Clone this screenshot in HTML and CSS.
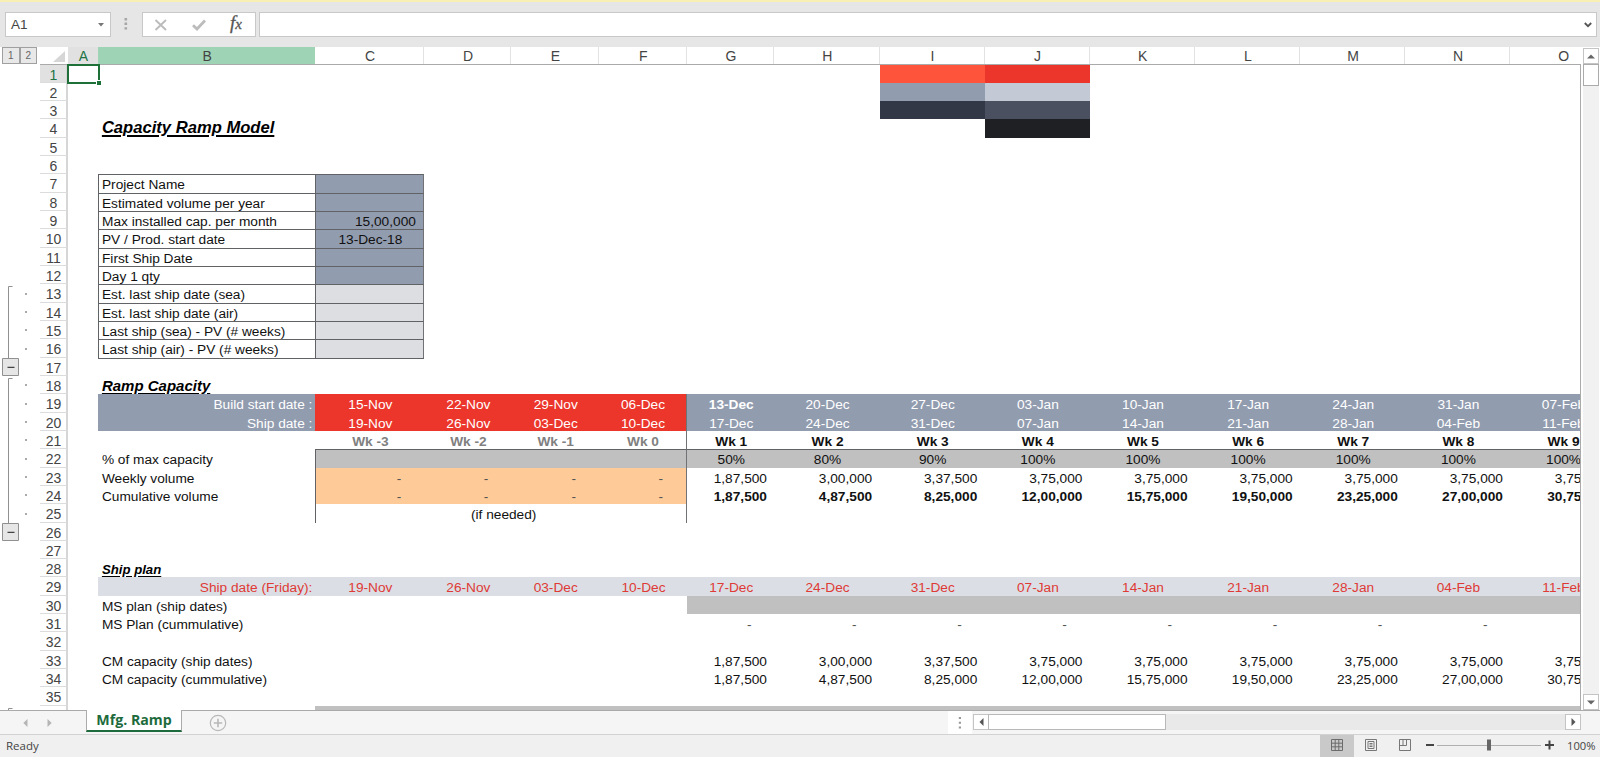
FILE: index.html
```html
<!DOCTYPE html>
<html lang="en">
<head>
<meta charset="utf-8">
<title>Capacity Ramp Model</title>
<link rel="stylesheet" href="styles.css">
</head>
<body>
<div class="app">
  <header class="formula-bar">
    <div class="name-box"><span>A1</span>
      <svg width="6" height="4" viewBox="0 0 6 4"><path d="M0 0h6L3 3.6z" fill="#777"/></svg>
    </div>
    <svg class="grip" width="4" height="14" viewBox="0 0 4 14" fill="#a6a6a6"><path d="M.5 1h2.6v2.4H.5zM.5 5.6h2.6V8H.5zM.5 10.2h2.6v2.4H.5z"/></svg>
    <div class="fx-box">
      <svg width="14" height="14" viewBox="0 0 14 14"><path d="M1.5 2 12 12M12 2 1.5 12" stroke="#bcbcbc" stroke-width="1.9" fill="none"/></svg>
      <svg width="14" height="14" viewBox="0 0 14 14"><path d="M1 7.2 5 11 13 2.500" stroke="#bcbcbc" stroke-width="2.8" fill="none"/></svg>
      <span class="fx">f<small>x</small></span>
    </div>
    <div class="formula-input">
      <svg width="8" height="6" viewBox="0 0 8 6"><path d="M.8 1 4 4.2 7.2 1" stroke="#555" stroke-width="1.8" fill="none"/></svg>
    </div>
  </header>
  <main class="workspace">
    <aside class="outline">
      <div class="levels"><span>1</span><span>2</span></div>
      <svg width="40" height="645" viewBox="0 65 40 645">
        <g fill="none" stroke="#909090">
          <path d="M12.5 286.5h-4V358M12.5 378.5h-4V523M12.5 708.5h-4V712"/>
          <path fill="#e6e6e6" d="M2.5 358.5h16v17h-16zM2.5 523.5h16v17h-16z"/>
          <path stroke="#444" stroke-width="1.4" d="M7.5 367.4h7M7.5 532.4h7"/>
        </g>
        <g id="outline-dots" fill="#aaa"></g>
      </svg>
    </aside>
    <section class="sheet">
      <div class="sheet-grid" id="sheet"></div>
      <div class="selection"><i></i></div>
    </section>
    <div class="edge"></div>
    <div class="vscroll">
      <div class="sbtn"><svg width="8" height="5" viewBox="0 0 8 5"><path d="M0 4.5h8L4 .5z" fill="#666"/></svg></div>
      <div class="vthumb"></div>
      <div class="vtrack"></div>
      <div class="sbtn"><svg width="8" height="5" viewBox="0 0 8 5"><path d="M0 .5h8L4 4.5z" fill="#666"/></svg></div>
    </div>
  </main>
  <nav class="tabs">
    <div class="tab-arrows">
      <svg width="5" height="8" viewBox="0 0 5 8"><path d="M4.5 0v8L.3 4z" fill="#b5b5b5"/></svg>
      <svg width="5" height="8" viewBox="0 0 5 8"><path d="M.5 0v8L4.7 4z" fill="#b5b5b5"/></svg>
    </div>
    <div class="tab"><span>Mfg. Ramp</span></div>
    <svg class="add" width="18" height="18" viewBox="0 0 18 18" fill="none" stroke="#b8b8b8"><circle cx="9" cy="9" r="7.7" stroke-width="1.2"/><path d="M9 4.8v8.4M4.8 9h8.4" stroke-width="1.6"/></svg>
    <div class="splitter"><svg width="4" height="12" viewBox="0 0 4 12" fill="#999"><path d="M.8 0h2.2v2H.8zM.8 4.7h2.2v2H.8zM.8 9.4h2.2v2H.8z"/></svg></div>
    <div class="hscroll">
      <div class="sbtn"><svg width="5" height="8" viewBox="0 0 5 8"><path d="M4.5 0v8L.5 4z" fill="#555"/></svg></div>
      <div class="hthumb"></div>
      <div class="htrack"></div>
      <div class="sbtn"><svg width="5" height="8" viewBox="0 0 5 8"><path d="M.5 0v8L4.5 4z" fill="#555"/></svg></div>
    </div>
  </nav>
  <footer class="status">
    <span class="ready">Ready</span>
    <div class="view on"><svg width="12" height="12" viewBox="0 0 12 12" fill="none" stroke="#6c6c6c"><path d="M.5.5h11v11H.5zM4.2 0v12M7.8 0v12M0 4.2h12M0 7.8h12"/></svg></div>
    <div class="view"><svg width="12" height="12" viewBox="0 0 12 12" fill="none" stroke="#777"><path d="M.5.5h11v11H.5zM3 2.5h6v7H3zM4.5 4.5h3M4.5 6h3M4.5 7.5h3"/></svg></div>
    <div class="view"><svg width="12" height="12" viewBox="0 0 12 12" fill="none" stroke="#777"><path d="M.5.5h11v11H.5zM.5 6.500h7v-6M4 .5v6"/></svg></div>
    <svg class="zoom-slider" width="130" height="14" viewBox="0 0 130 14"><path d="M0 7h8" stroke="#444" stroke-width="2"/><path d="M11 7.5h104" stroke="#b0b0b0"/><path d="M61 1.5h4v11h-4z" fill="#666"/><path d="M119 7h9M123.500 2.500v9" stroke="#444" stroke-width="2"/></svg>
    <span class="percent">100%</span>
  </footer>
</div>
<script src="sheet.js"></script>
</body>
</html>
```
FILE: styles.css
```css
* { box-sizing: border-box; }
body { margin: 0; font-family: "Liberation Sans", Arial, sans-serif; background: #fff; }
svg { display: block; flex: none; }
.app { width: 1600px; height: 757px; overflow: hidden; display: flex; flex-direction: column; }

.formula-bar { height: 47px; flex: none; background: #e6e6e6; border-top: 2px solid #f7efb4; padding: 10px 3px 10px 5px; display: flex; }
.name-box, .fx-box, .formula-input { height: 25px; background: #fff; border: 1px solid #c8c8c8; display: flex; align-items: center; }
.name-box { width: 106px; padding: 0 6px 0 5px; justify-content: space-between; font-size: 13.5px; color: #444; }
.grip { margin: 5px 14px 0 13px; }
.fx-box { width: 114px; padding: 0 12px 0 11px; justify-content: space-between; }
.fx { font: italic 19px/22px "Liberation Serif", serif; color: #555; padding-right: 1px; margin-top: -2px; -webkit-text-stroke: .3px #555; }
.fx small { font-size: 15px; }
.formula-input { flex: 1; margin-left: 3px; justify-content: flex-end; padding-right: 4px; }

.workspace { height: 663px; flex: none; display: flex; }
.outline { width: 40px; height: 663px; overflow: hidden; flex: none; }
.levels { height: 18px; padding-left: 2px; display: flex; }
.levels span { width: 17.500px; height: 17px; border: 1px solid #a0a0a0; background: #e8e8e8; color: #666; font-size: 10px; line-height: 16px; text-align: center; }

.sheet { position: relative; flex: none; width: 1540px; overflow: hidden; }
.edge { width: 1px; flex: none; background: #aaa; margin-top: 17px; }
.sheet-grid { width: 1576px; }
.row { display: grid; grid-template-rows: 100%; grid-template-columns: 28px 30.4px 217px 109px 87px 87.600px 88px 87.500px repeat(8, 105.15px); height: 18.34px; font-size: 13.7px; line-height: 21.200px; white-space: nowrap; color: #111; }
.row.head { height: 18px; border-bottom: 1px solid #aaa; color: #444; font-size: 14px; line-height: 18.500px; text-align: center; }
.row.head + .row { height: 17.64px; }
.head > div + div { border-right: 1px solid #e2e2e2; padding-left: 1.5px; }
.head .corner { display: flex; justify-content: flex-end; padding: 4px 3px 0 0; }
.head .col-a { background: #e1e1e1; color: #217346; border-color: #e1e1e1; }
.head .col-b { background: #9fd3b6; border-color: #9fd3b6; }
.head .last { border: 0; }
.rh { border-right: 2px solid #d6d6d6; border-bottom: 1px solid #dcdcdc; color: #444; font-size: 14px; line-height: 21px; text-align: center; padding-left: 1px; }
.rh.active { background: #e1e1e1; color: #217346; }
.cell { min-width: 0; overflow: visible; height: 100%; }
.left { padding-left: 3.5px; }
.left.bl { padding-left: 2.600px; }
.label-right { text-align: right; padding-right: 3px; }
.center { text-align: center; padding-left: 1px; }
.num { text-align: right; padding-right: 7.5px; }
.dash { text-align: right; padding-right: 23px; color: #555; }
.bold { font-weight: 700; }
.white { color: #fff; }
.gray { color: #808080; }
.redtext { color: #df3a36; }
.title, .section, .subsection { font: italic 700 16.6px/18.400px "Liberation Sans", Arial, sans-serif; color: #000; text-decoration: underline; text-decoration-thickness: 1.5px; text-underline-offset: 2px; }
.section { font-size: 15px; line-height: 19px; }
.subsection { font-size: 13.2px; line-height: 21.200px; }
.slate { background: #929caf; }
.light { background: #dcdee2; }
.pale { background: #dbdfe5; }
.red { background: #ec352b; }
.grey { background: #c0c0c0; }
.orange { background: #fecb98; }
.sw-coral { background: #ff543c; }
.sw-mist { background: #c4cad5; }
.sw-navy { background: #323846; }
.sw-dusk { background: #4b5060; }
.sw-black { background: #1f2023; }
.bt { border-top: 1px solid #606266; line-height: 19.600px; }
.bl { border-left: 1px solid #606266; }
.br { border-right: 1px solid #707276; }
.needed { grid-column: span 4; padding-left: 5px; }
.selection { position: absolute; left: 27px; top: 17px; width: 33px; height: 20px; border: 2px solid #1c7038; }
.selection i { position: absolute; right: -3px; bottom: -3px; width: 5px; height: 5px; background: #1c7038; border: solid #fff; border-width: 1px 0 0 1px; }

.vscroll { margin: 1px 1px 0 auto; width: 16px; display: flex; flex-direction: column; height: 662px; }
.sbtn { width: 16px; height: 16px; flex: none; border: 1px solid #c4c4c4; background: #fff; display: flex; align-items: center; justify-content: center; }
.vthumb { height: 22px; border: 1px solid #ababab; background: #fff; }
.vtrack { flex: 1; background: #f1f1f1; }

.tabs { height: 25px; flex: none; background: #f5f5f5; border-top: 1px solid #aaa; border-bottom: 1px solid #d2d2d2; display: flex; }
.tab-arrows { width: 86px; padding: 8px 0 0 23px; display: flex; gap: 19px; }
.tab { width: 96px; height: 22px; margin-top: -1px; background: #fff; border: solid #ababab; border-width: 0 1px; border-bottom: 2px solid #1d6b3d; font: 700 14.200px/19px "Open Sans", "Noto Sans", sans-serif; color: #1d6b3d; text-align: center; white-space: nowrap; }
.add { margin: 3px 0 0 27px; }
.splitter { margin-left: auto; width: 24px; background: #fff; display: flex; align-items: center; justify-content: center; }
.hscroll { margin: 3px 19px 0 1px; width: 608px; height: 16px; display: flex; }
.hthumb { width: 178px; border: 1px solid #b8b8b8; background: #fff; margin-left: -1px; }
.htrack { flex: 1; background: #e9e9e9; }

.status { height: 22px; flex: none; background: #f0f0f0; display: flex; align-items: center; font: 11.500px/20px "Open Sans", "Noto Sans", sans-serif; color: #444; }
.ready { padding-left: 6px; margin-right: auto; }
.view { width: 34px; height: 22px; padding-bottom: 2px; display: flex; align-items: center; justify-content: center; }
.view.on { background: #c9c9c9; }
.zoom-slider { margin: 0 11px 2px 4px; }
.percent { width: 33px; font-size: 11.2px; }
```
FILE: sheet.js
```javascript
const COLS = 'ABCDEFGHIJKLMNO'.split('');
const WEEKS = COLS.slice(6);
const PRE = COLS.slice(2, 6);
const cells = {};

function put(row, col, cls, text = '') {
  const key = col + row;
  const prev = cells[key] || { cls: '', text: '' };
  cells[key] = { cls: prev.cls + ' ' + cls, text: text || prev.text };
}
function putAll(row, cols, cls, texts = []) {
  cols.forEach((c, i) => put(row, c, cls, texts[i]));
}

put(1, 'I', 'sw-coral'); put(1, 'J', 'red');
put(2, 'I', 'slate'); put(2, 'J', 'sw-mist');
put(3, 'I', 'sw-navy'); put(3, 'J', 'sw-dusk');
put(4, 'J', 'sw-black');
put(4, 'B', 'left title', 'Capacity Ramp Model');

['Project Name', 'Estimated volume per year', 'Max installed cap. per month',
 'PV / Prod. start date', 'First Ship Date', 'Day 1 qty', 'Est. last ship date (sea)',
 'Est. last ship date (air)', 'Last ship (sea) - PV (# weeks)', 'Last ship (air) - PV (# weeks)']
  .forEach((label, i) => {
    put(7 + i, 'B', 'left bt bl', label);
    put(7 + i, 'C', 'bt bl br ' + (i < 6 ? 'slate' : 'light'));
  });
put(9, 'C', 'num', '15,00,000');
put(10, 'C', 'center', '13-Dec-18');
putAll(17, ['B', 'C'], 'bt');

put(18, 'B', 'left section', 'Ramp Capacity');
put(19, 'B', 'slate white label-right', 'Build start date :');
put(20, 'B', 'slate white label-right', 'Ship date :');
putAll(19, PRE, 'red white center', ['15-Nov', '22-Nov', '29-Nov', '06-Dec']);
putAll(20, PRE, 'red white center', ['19-Nov', '26-Nov', '03-Dec', '10-Dec']);
putAll(19, WEEKS, 'slate white center', ['13-Dec', '20-Dec', '27-Dec', '03-Jan', '10-Jan', '17-Jan', '24-Jan', '31-Jan', '07-Feb']);
put(19, 'G', 'bold');
const shipDates = ['17-Dec', '24-Dec', '31-Dec', '07-Jan', '14-Jan', '21-Jan', '28-Jan', '04-Feb', '11-Feb'];
putAll(20, WEEKS, 'slate white center', shipDates);
putAll(21, PRE, 'gray bold center', ['Wk -3', 'Wk -2', 'Wk -1', 'Wk 0']);
putAll(21, WEEKS, 'bold center', WEEKS.map((_, i) => 'Wk ' + (i + 1)));
put(22, 'B', 'left', '% of max capacity');
putAll(22, PRE, 'grey bt');
putAll(22, WEEKS, 'grey bt center', ['50%', '80%', '90%', '100%', '100%', '100%', '100%', '100%', '100%']);
put(23, 'B', 'left', 'Weekly volume');
put(24, 'B', 'left', 'Cumulative volume');
const weekly = ['1,87,500', '3,00,000', '3,37,500', '3,75,000', '3,75,000', '3,75,000', '3,75,000', '3,75,000', '3,75,000'];
const total = ['1,87,500', '4,87,500', '8,25,000', '12,00,000', '15,75,000', '19,50,000', '23,25,000', '27,00,000', '30,75,000'];
[23, 24].forEach(r => putAll(r, PRE, 'orange dash', ['-', '-', '-', '-']));
putAll(23, WEEKS, 'num', weekly);
putAll(24, WEEKS, 'num bold', total);
put(25, 'C', 'center needed', '(if needed)');
[22, 23, 24, 25].forEach(r => put(r, 'C', 'bl'));
[19, 20, 21, 22, 23, 24].forEach(r => put(r, 'F', 'br'));
put(25, 'C', 'br');

put(28, 'B', 'left subsection', 'Ship plan');
put(29, 'B', 'pale redtext label-right', 'Ship date (Friday):');
putAll(29, PRE, 'pale redtext center', ['19-Nov', '26-Nov', '03-Dec', '10-Dec']);
putAll(29, WEEKS, 'pale redtext center', shipDates);
put(30, 'B', 'left', 'MS plan (ship dates)');
putAll(30, WEEKS, 'grey');
put(31, 'B', 'left', 'MS Plan (cummulative)');
putAll(31, WEEKS.slice(0, 8), 'dash', Array(8).fill('-'));
put(33, 'B', 'left', 'CM capacity (ship dates)');
put(34, 'B', 'left', 'CM capacity (cummulative)');
putAll(33, WEEKS, 'num', weekly);
putAll(34, WEEKS, 'num', total);
putAll(36, COLS.slice(2), 'grey');

let html = '<div class="row head"><div class="corner"><svg width="12" height="11" viewBox="0 0 12 11"><path d="M12 0v11H0z" fill="#d6d6d6"/></svg></div>' +
  COLS.map(c => `<div class="col-${c.toLowerCase()}${c === 'O' ? ' last' : ''}">${c}</div>`).join('') + '</div>';
for (let r = 1; r <= 36; r++) {
  html += `<div class="row"><div class="rh${r === 1 ? ' active' : ''}">${r < 36 ? r : ''}</div>`;
  COLS.forEach(c => {
    if (r === 25 && 'DEF'.includes(c)) return;
    const d = cells[c + r] || { cls: '', text: '' };
    html += `<div class="cell ${d.cls}">${d.text}</div>`;
  });
  html += '</div>';
}
document.getElementById('sheet').innerHTML = html;

let dots = '';
for (let r = 13; r <= 25; r++) {
  if (r === 17) continue;
  dots += `<rect x="25" y="${Math.round(64.3 + (r - 0.5) * 18.34 - 1)}" width="2" height="2"/>`;
}
document.getElementById('outline-dots').innerHTML = dots;
```
